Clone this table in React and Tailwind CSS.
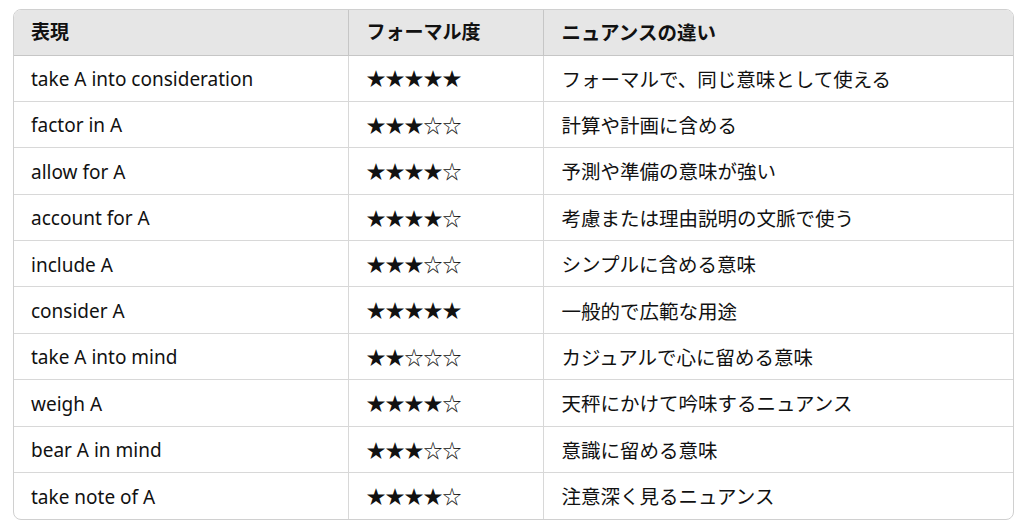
const rows = [
  ["take A into consideration", "★★★★★", "フォーマルで、同じ意味として使える"],
  ["factor in A", "★★★☆☆", "計算や計画に含める"],
  ["allow for A", "★★★★☆", "予測や準備の意味が強い"],
  ["account for A", "★★★★☆", "考慮または理由説明の文脈で使う"],
  ["include A", "★★★☆☆", "シンプルに含める意味"],
  ["consider A", "★★★★★", "一般的で広範な用途"],
  ["take A into mind", "★★☆☆☆", "カジュアルで心に留める意味"],
  ["weigh A", "★★★★☆", "天秤にかけて吟味するニュアンス"],
  ["bear A in mind", "★★★☆☆", "意識に留める意味"],
  ["take note of A", "★★★★☆", "注意深く見るニュアンス"],
];

export default function App() {
  return (
    <div
      className="w-[1024px] h-[532px] bg-white pt-[9px] pl-[13px]"
      style={{ fontFamily: '"Noto Sans", "Noto Sans CJK JP", sans-serif' }}
    >
      <div className="w-[1001px] border border-[#d0d0d0] rounded-[8px] overflow-hidden">
        <table className="w-full table-fixed border-collapse text-[19px] text-[#111]">
          <colgroup>
            <col className="w-[334px]" />
            <col className="w-[195px]" />
            <col />
          </colgroup>
          <thead>
            <tr className="bg-[#e6e6e6] h-[45px]">
              <th className="text-left font-bold pl-[17px] pr-[18px] border-b border-[#c6c6c6]">表現</th>
              <th className="text-left font-bold px-[18px] border-b border-l border-[#c6c6c6]">フォーマル度</th>
              <th className="text-left font-bold px-[18px] border-b border-l border-[#c6c6c6] text-[19.5px]">ニュアンスの違い</th>
            </tr>
          </thead>
          <tbody>
            {rows.map((r, i) => (
              <tr key={i} className="h-[46.4px]">
                <td className={"pl-[17px] pr-[18px] pt-[2px] " + (i < rows.length - 1 ? "border-b border-[#d8d8d8]" : "")}>{r[0]}</td>
                <td className={"px-[18px] pt-[2px] border-l border-[#d8d8d8] " + (i < rows.length - 1 ? "border-b" : "")}>
                  <span style={{ fontFamily: '"Noto Sans CJK JP", sans-serif' }}>{r[1]}</span>
                </td>
                <td className={"px-[18px] pt-[2px] border-l border-[#d8d8d8] text-[19.5px] " + (i < rows.length - 1 ? "border-b" : "")}>{r[2]}</td>
              </tr>
            ))}
          </tbody>
        </table>
      </div>
    </div>
  );
}
